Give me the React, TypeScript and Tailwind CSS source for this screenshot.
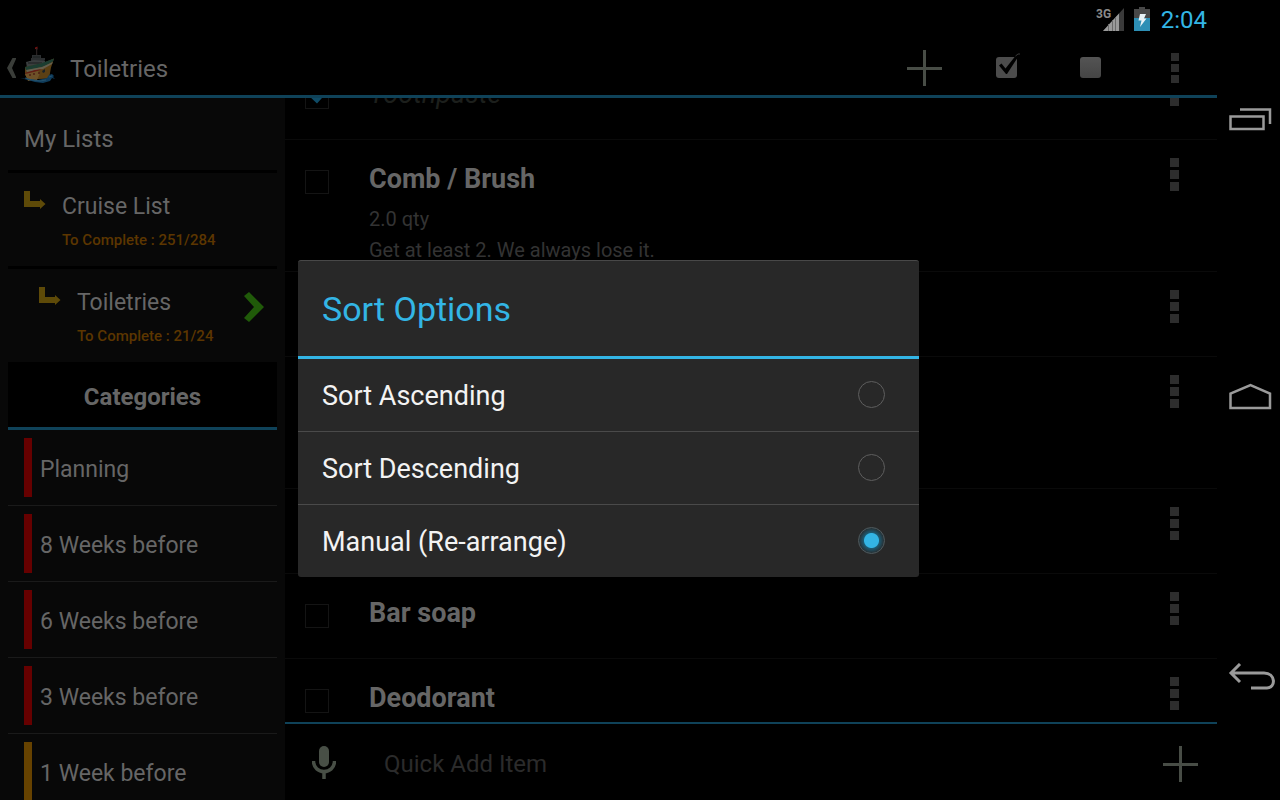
import React from "react";

type Category = { name: string; bar: string };
type Item = { title?: string; qty?: string; note?: string; done?: boolean; tall?: boolean };

const categories: Category[] = [
  { name: "Planning", bar: "bg-[#660000]" },
  { name: "8 Weeks before", bar: "bg-[#660000]" },
  { name: "6 Weeks before", bar: "bg-[#660000]" },
  { name: "3 Weeks before", bar: "bg-[#660000]" },
  { name: "1 Week before", bar: "bg-[#664200]" },
];

const items: Item[] = [
  { title: "Toothpaste", done: true },
  { title: "Comb / Brush", qty: "2.0 qty", note: "Get at least 2. We always lose it.", tall: true },
  {},
  { tall: true },
  {},
  { title: "Bar soap" },
  { title: "Deodorant" },
];

const sortOptions = ["Sort Ascending", "Sort Descending", "Manual (Re-arrange)"];

function ShipIcon() {
  return (
    <svg className="opacity-85" width="36" height="38" viewBox="0 0 36 38" aria-hidden="true">
      <path d="M15 1.5l2.5-1v3l-2.500-.5z" fill="#8a1414" />
      <path d="M16.7 2v7" stroke="#3a3030" strokeWidth="1" />
      <path d="M12 9h9v3h4v2l-2 3H9v-2h2v-3h1z" fill="#333739" />
      <path d="M6 16l8-2 11 1v4l-10 2-8 1z" fill="#45494a" />
      <path d="M8 17h14M13 11h7" stroke="#202425" strokeWidth="1" />
      <path d="M5 21l18-4 11-4.500-3 9-2 11-21 1-3-5z" fill="#6d4c18" />
      <path d="M5 21l17-4 12-4.500-1 3-9 5-18 4z" fill="#21483a" />
      <path d="M6 24l16-3 11-5-1 2-9 5-16 3z" fill="#77705c" />
      <path d="M5 27l10-3 7-1-7 3-9 3z" fill="#742019" />
      <path d="M5 28l13-3 2 2-3 7-9 1z" fill="#80602f" />
      <path d="M22 25l3-2v3l-2 1z" fill="#1e2730" />
      <path d="M9 29h2M13 28h2M18 27h2" stroke="#5a2418" strokeWidth="1.500" />
      <path d="M0 32l8 1 10 1 9-2 2-3 3-1 2 2-1 1 2 2-3-1-2 3-7 2-8-1-7-2z" fill="#12466a" />
      <path d="M5 32l7 2 8 1 6-1M29 31l3-1" stroke="#2a6080" strokeWidth="1" fill="none" />
    </svg>
  );
}

function Plus() {
  return (
    <svg width="36" height="36" viewBox="0 0 36 36" aria-hidden="true">
      <path d="M17.500 0v36M0 18.500h35" stroke="#484d46" strokeWidth="3" />
    </svg>
  );
}

function Dots({ small }: { small?: boolean }) {
  const dot = small ? "size-2 bg-[#2d2d2d]" : "size-[9px] bg-[#2d2d2d]";
  return (
    <span className="flex flex-col gap-[3px]">
      <span className={dot} />
      <span className={dot} />
      <span className={dot} />
    </span>
  );
}

function BranchArrow() {
  return (
    <svg className="shrink-0" width="22" height="19" viewBox="0 0 22 19" aria-hidden="true">
      <path d="M0 0h6v10h10V8l5.500 5-5.500 5v-2H0z" fill="#5e4a08" />
    </svg>
  );
}

function StatusBar() {
  return (
    <div className="flex h-[38px] shrink-0 items-center justify-end pt-px pr-[10px] text-2xl leading-6 text-[#33b5e5]">
      <svg className="mr-2 mb-[2px]" width="30" height="24" viewBox="-2 0 30 24" role="img" aria-label="3G signal">
        <path d="M5 24L26 1v23z" fill="#3a3a3a" />
        <path d="M5 24L21 6.500V24z" fill="#9a9a9a" />
        <path d="M10.500 17v7M14.500 13v11M17.500 10v14" stroke="#6a6a6a" strokeWidth="1" />
        <path d="M-2 0h16v11l-2 2H-2z" fill="#000" />
        <text x="-2" y="11" fontSize="12" fontWeight="700" fontFamily="Roboto, sans-serif" fill="#8a8a8a">
          3G
        </text>
      </svg>
      <svg className="mr-[11px] mb-[2px]" width="16" height="24" viewBox="0 0 16 24" role="img" aria-label="Battery charging">
        <path d="M0 2h5V0h6v2h5v10H0z" fill="#484848" />
        <path d="M0 11h16v13H0z" fill="#2d8fb5" />
        <path d="M6 7h6l-2 4.500h2.500L6 20l1.500-6.500H4.500z" fill="#e8f2f6" />
      </svg>
      <span>2:04</span>
    </div>
  );
}

function ActionBar() {
  return (
    <header className="flex h-[60px] shrink-0 items-center border-b-[3px] border-[#0f4259] pt-[3px]">
      <button type="button" aria-label="Back" className="ml-1 flex items-center gap-1">
        <svg width="12" height="22" viewBox="0 0 12 22" aria-hidden="true">
          <path d="M8.500 1h4L8 11l4.500 10h-4L3 11z" fill="#3a3d39" />
        </svg>
        <span className="-mt-[6px]">
          <ShipIcon />
        </span>
      </button>
      <h1 className="ml-[14px] flex-1 pt-[2px] text-2xl text-[#666]">Toiletries</h1>
      <div className="flex items-center">
        <button type="button" aria-label="Add item" className="mr-[53px]">
          <Plus />
        </button>
        <button type="button" aria-label="Check all" className="mr-[58px] mb-1">
          <svg width="26" height="26" viewBox="0 0 26 26" aria-hidden="true">
            <rect x="0" y="4" width="21" height="21" rx="3" fill="#4c4c4c" />
            <path d="M3 12.500l2.500-2 4 5L21 1h3L11 21h-1z" fill="#000" />
            <path d="M19.500 3L22 1h2" stroke="#383838" fill="none" />
          </svg>
        </button>
        <button
          type="button"
          aria-label="Uncheck all"
          className="mr-[70px] mb-px h-[21px] w-[21px] rounded-[3px] bg-linear-to-b from-[#545454] to-[#454545]"
        />
        <button type="button" aria-label="More options" className="mr-[38px]">
          <Dots small />
        </button>
      </div>
    </header>
  );
}

function ListEntry({ name, progress, indent, active }: { name: string; progress: string; indent: string; active?: boolean }) {
  return (
    <li className="border-t-[3px] border-black">
      <a href="#list" className={"flex h-[93px] gap-[16px] pt-[18px] " + indent}>
        <BranchArrow />
        <span className="flex-1">
          <span className="block text-[23px] leading-8 text-[#666]">{name}</span>
          <span className="mt-[7px] block text-[15px] leading-5 font-medium text-[#5c3600]">{progress}</span>
        </span>
        {active && (
          <svg className="mt-1 mr-3 shrink-0" width="22" height="32" viewBox="0 0 22 32" aria-hidden="true">
            <path d="M1 5l5-4 15 15L6 31l-5-4 10-11z" fill="#205a09" />
          </svg>
        )}
      </a>
    </li>
  );
}

function Sidebar() {
  return (
    <aside className="w-[285px] shrink-0 overflow-hidden bg-[#080808] px-2">
      <h2 className="flex h-[72px] items-center px-4 pt-[10px] text-2xl text-[#666]">My Lists</h2>
      <ul>
        <ListEntry name="Cruise List" progress="To Complete : 251/284" indent="pl-4" />
        <ListEntry name="Toiletries" progress="To Complete : 21/24" indent="pl-[31px]" active />
      </ul>
      <h2 className="flex h-[68px] items-center justify-center border-b-[3px] border-[#0f4259] bg-black pt-[5px] text-2xl font-bold text-[#666]">
        Categories
      </h2>
      <ul>
        {categories.map((c) => (
          <li key={c.name} className="border-b border-[#1a1a1a]">
            <a href="#category" className="flex h-[75px] items-center gap-2 px-4 text-[23px] text-[#666]">
              <span className={"h-[59px] w-2 " + c.bar} />
              <span className="pt-[5px]">{c.name}</span>
            </a>
          </li>
        ))}
      </ul>
    </aside>
  );
}

function ItemRow({ item }: { item: Item }) {
  return (
    <li className={"flex shrink-0 border-b border-[#0a0a0a] pt-[18px] pl-5 " + (item.tall ? "h-[132px]" : "h-[85px]")}>
      <input
        type="checkbox"
        defaultChecked={item.done}
        aria-label={item.title ?? "Item"}
        className="mt-3 h-6 w-6 shrink-0 appearance-none border border-[#141414]"
      />
      {item.done && (
        <svg className="mt-3 -ml-6 shrink-0" width="24" height="24" viewBox="0 0 24 24" aria-hidden="true">
          <path d="M2 9l4-4 6 6L22 0l4 3-14 15.500z" fill="#0f4b66" />
        </svg>
      )}
      <div className="ml-10 flex-1">
        <p className={"text-[27px] leading-[42px] " + (item.done ? "text-[#1c1f1c] italic" : "font-bold text-[#666]")}>{item.title}</p>
        {item.qty && <p className="mt-1 text-xl leading-[31px] text-[#333]">{item.qty}</p>}
        {item.note && <p className="text-xl leading-[31px] text-[#333]">{item.note}</p>}
      </div>
      <button type="button" aria-label="Item menu" className="mr-[38px] self-start">
        <Dots />
      </button>
    </li>
  );
}

function SortDialog() {
  return (
    <div className="absolute top-[38px] right-0 bottom-0 left-0 flex items-center justify-center pb-[2px]">
      <div role="dialog" aria-labelledby="sort-title" className="w-[621px] rounded-[3px] border-t border-[#484848] bg-[#282828]">
        <h2 id="sort-title" className="flex h-[98px] items-center border-b-[3px] border-[#33b5e5] px-6 pt-[2px] text-[34px] text-[#33b5e5]">
          Sort Options
        </h2>
        <ul>
          {sortOptions.map((label, i) => (
            <li key={label} className={i > 0 ? "border-t border-[#4a4a4a]" : ""}>
              <label className="flex h-[72px] items-center justify-between pr-[34px] pl-6 text-[27px] text-[#f3f3f3]">
                <span className="pt-[3px]">{label}</span>
                <input
                  type="radio"
                  name="sort"
                  defaultChecked={i === 2}
                  className="h-[27px] w-[27px] appearance-none rounded-full border border-[#5e5e5e] checked:border-[#4f5a5e] checked:bg-[radial-gradient(circle,#33b5e5_0_7px,#1d5970_8px,#26343a_12px)]"
                />
              </label>
            </li>
          ))}
        </ul>
      </div>
    </div>
  );
}

function SystemNav() {
  return (
    <nav className="flex w-[63px] shrink-0 flex-col items-end justify-between pt-[107px] pb-[109px]">
      <button type="button" aria-label="Recent apps" className="mr-2">
        <svg width="44" height="24" viewBox="0 0 44 24" fill="none" stroke="#9a9a9a" strokeWidth="2.500" aria-hidden="true">
          <path d="M2.500 9.500h33v12.500h-33zM12 2.500h30V17" />
        </svg>
      </button>
      <button type="button" aria-label="Home" className="mr-2">
        <svg width="44" height="28" viewBox="0 0 44 28" fill="none" stroke="#9a9a9a" strokeWidth="2.500" aria-hidden="true">
          <path d="M2.500 25V10.500L22.500 2l19.500 8.500V25z" />
        </svg>
      </button>
      <button type="button" aria-label="Go back" className="mr-1">
        <svg width="48" height="28" viewBox="0 0 48 28" fill="none" stroke="#9a9a9a" strokeWidth="3" aria-hidden="true">
          <path d="M12 1L3 10l9 9M3 10h33c12 0 12 15 3 15H23" />
        </svg>
      </button>
    </nav>
  );
}

export default function App() {
  return (
    <div className="flex h-screen overflow-hidden bg-black font-[Roboto,sans-serif]">
      <div className="relative flex min-w-0 flex-1 flex-col">
        <StatusBar />
        <ActionBar />
        <div className="flex min-h-0 flex-1">
          <Sidebar />
          <main className="flex min-w-0 flex-1 flex-col">
            <ul className="flex min-h-0 flex-1 flex-col overflow-hidden before:-mb-[43px] before:content-['']">
              {items.map((item, i) => (
                <ItemRow key={i} item={item} />
              ))}
            </ul>
            <form className="flex h-[78px] shrink-0 items-center border-t-2 border-[#0f4259] pt-1 pr-[18px] pl-[27px]">
              <button type="button" aria-label="Voice input" className="pb-[2px]">
                <svg width="24" height="34" viewBox="0 0 24 34" aria-hidden="true">
                  <rect x="7" y="0" width="10" height="21" rx="5" fill="#484f46" />
                  <path d="M1.500 15c0 14 21 14 21 0M12 25v8" fill="none" stroke="#484f46" strokeWidth="3.500" />
                </svg>
              </button>
              <input
                type="text"
                aria-label="Quick Add Item"
                placeholder="Quick Add Item"
                className="ml-12 min-w-0 flex-1 bg-transparent text-2xl text-[#666] outline-none placeholder:text-[#2b2b2b]"
              />
              <button type="button" aria-label="Add">
                <Plus />
              </button>
            </form>
          </main>
        </div>
        <SortDialog />
      </div>
      <SystemNav />
    </div>
  );
}
